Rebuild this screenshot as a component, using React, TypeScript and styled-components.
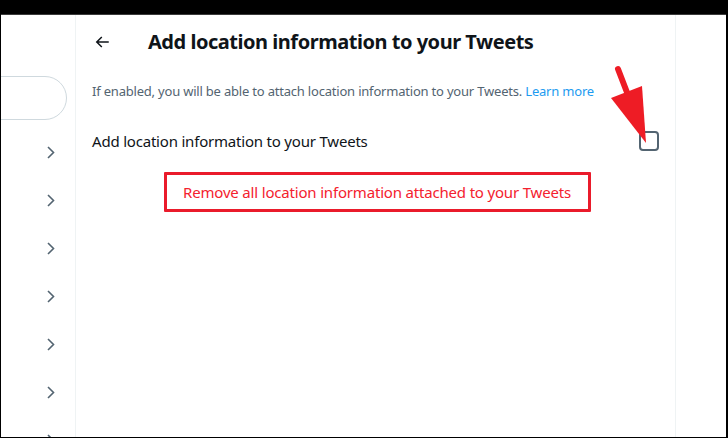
import React from "react";
import styled, { createGlobalStyle } from "styled-components";

const GlobalStyle = createGlobalStyle`
  html, body {
    margin: 0;
    padding: 0;
    background: #000;
  }
  body {
    font-family: "Segoe UI", "Noto Sans", Lato, sans-serif;
  }
`;

const Frame = styled.div`
  width: 728px;
  height: 438px;
  box-sizing: border-box;
  background: #000;
  padding: 14px 2px 2px 1px;
`;

const Screen = styled.div`
  position: relative;
  height: 100%;
  background: #fff;
  border-top: 1px solid #3a3a3a;
  display: flex;
  overflow: hidden;
`;

const Sidebar = styled.aside`
  width: 74px;
  flex-shrink: 0;
  border-right: 1px solid #eff3f4;
  display: flex;
  flex-direction: column;
  padding-top: 61px;
  overflow: hidden;
`;

const SearchPill = styled.div`
  flex-shrink: 0;
  margin-left: -40px;
  width: 106px;
  height: 44px;
  border: 1px solid #cfd9de;
  border-radius: 22px;
  box-sizing: border-box;
`;

const NavList = styled.div`
  display: flex;
  flex-direction: column;
  padding-top: 8px;
`;

const NavRow = styled.div`
  height: 48px;
  display: flex;
  align-items: center;
  justify-content: flex-end;
  padding-right: 20px;
  flex-shrink: 0;
`;

const Main = styled.main`
  width: 599px;
  flex-shrink: 0;
  border-right: 1px solid #eff3f4;
  display: flex;
  flex-direction: column;
`;

const Header = styled.header`
  height: 53px;
  display: flex;
  align-items: center;
  padding: 0 16px;
  gap: 36px;
`;

const BackButton = styled.button`
  width: 20px;
  height: 20px;
  padding: 0;
  border: none;
  background: none;
  display: flex;
  align-items: center;
  justify-content: center;
  color: #0f1419;
`;

const Title = styled.h2`
  margin: 0;
  font-size: 20px;
  font-weight: 700;
  color: #0f1419;
  letter-spacing: -0.47px;
`;

const Description = styled.p`
  margin: 0;
  padding: 15px 16px 12px;
  font-size: 13px;
  line-height: 16px;
  color: #536471;
  letter-spacing: -0.2px;
`;

const LearnMore = styled.a`
  color: #1d9bf0;
  text-decoration: none;
`;

const SettingRow = styled.label`
  display: flex;
  align-items: center;
  justify-content: space-between;
  padding: 20px 16px 12px;
  font-size: 15px;
  color: #0f1419;
  letter-spacing: -0.2px;
`;

const Checkbox = styled.span`
  width: 16px;
  height: 16px;
  border: 2px solid #536471;
  border-radius: 4px;
`;

const ButtonWrap = styled.div`
  display: flex;
  justify-content: center;
  padding-top: 9px;
`;

const RemoveButton = styled.button`
  width: 427px;
  height: 40px;
  box-sizing: border-box;
  border: 3px solid #ea1b2b;
  border-radius: 1px;
  background: #fff;
  color: #f4212e;
  font-family: inherit;
  font-size: 15px;
  letter-spacing: -0.18px;
  margin-left: 3px;
`;

const Arrow = styled.svg`
  position: absolute;
  left: 605px;
  top: 34px;
  pointer-events: none;
`;

const Chevron = () => (
  <svg width="8" height="13" viewBox="0 0 8 13">
    <path d="M1 1l5.5 5.5L1 12" fill="none" stroke="#536471" strokeWidth="1.6" />
  </svg>
);

const App: React.FC = () => {
  const rows = Array.from({ length: 7 });
  return (
    <>
      <GlobalStyle />
      <Frame>
        <Screen>
          <Sidebar>
            <SearchPill />
            <NavList>
              {rows.map((_, i) => (
                <NavRow key={i}>
                  <Chevron />
                </NavRow>
              ))}
            </NavList>
          </Sidebar>
          <Main>
            <Header>
              <BackButton aria-label="Back">
                <svg width="18" height="18" viewBox="0 0 24 24">
                  <path
                    d="M7.414 13l5.043 5.04-1.414 1.42L3.586 12l7.457-7.46 1.414 1.42L7.414 11H21v2H7.414z"
                    fill="#0f1419"
                  />
                </svg>
              </BackButton>
              <Title>Add location information to your Tweets</Title>
            </Header>
            <Description>
              If enabled, you will be able to attach location information to your Tweets.{" "}
              <LearnMore href="#">Learn more</LearnMore>
            </Description>
            <SettingRow>
              Add location information to your Tweets
              <Checkbox />
            </SettingRow>
            <ButtonWrap>
              <RemoveButton>Remove all location information attached to your Tweets</RemoveButton>
            </ButtonWrap>
          </Main>
          <Arrow width="60" height="100" viewBox="0 0 60 100">
            <path d="M12 20 L22 46" stroke="#ee1c25" strokeWidth="6" strokeLinecap="round" fill="none" />
            <polygon points="5,49 36,37 40,94" fill="#ee1c25" />
          </Arrow>
        </Screen>
      </Frame>
    </>
  );
};

export default App;
